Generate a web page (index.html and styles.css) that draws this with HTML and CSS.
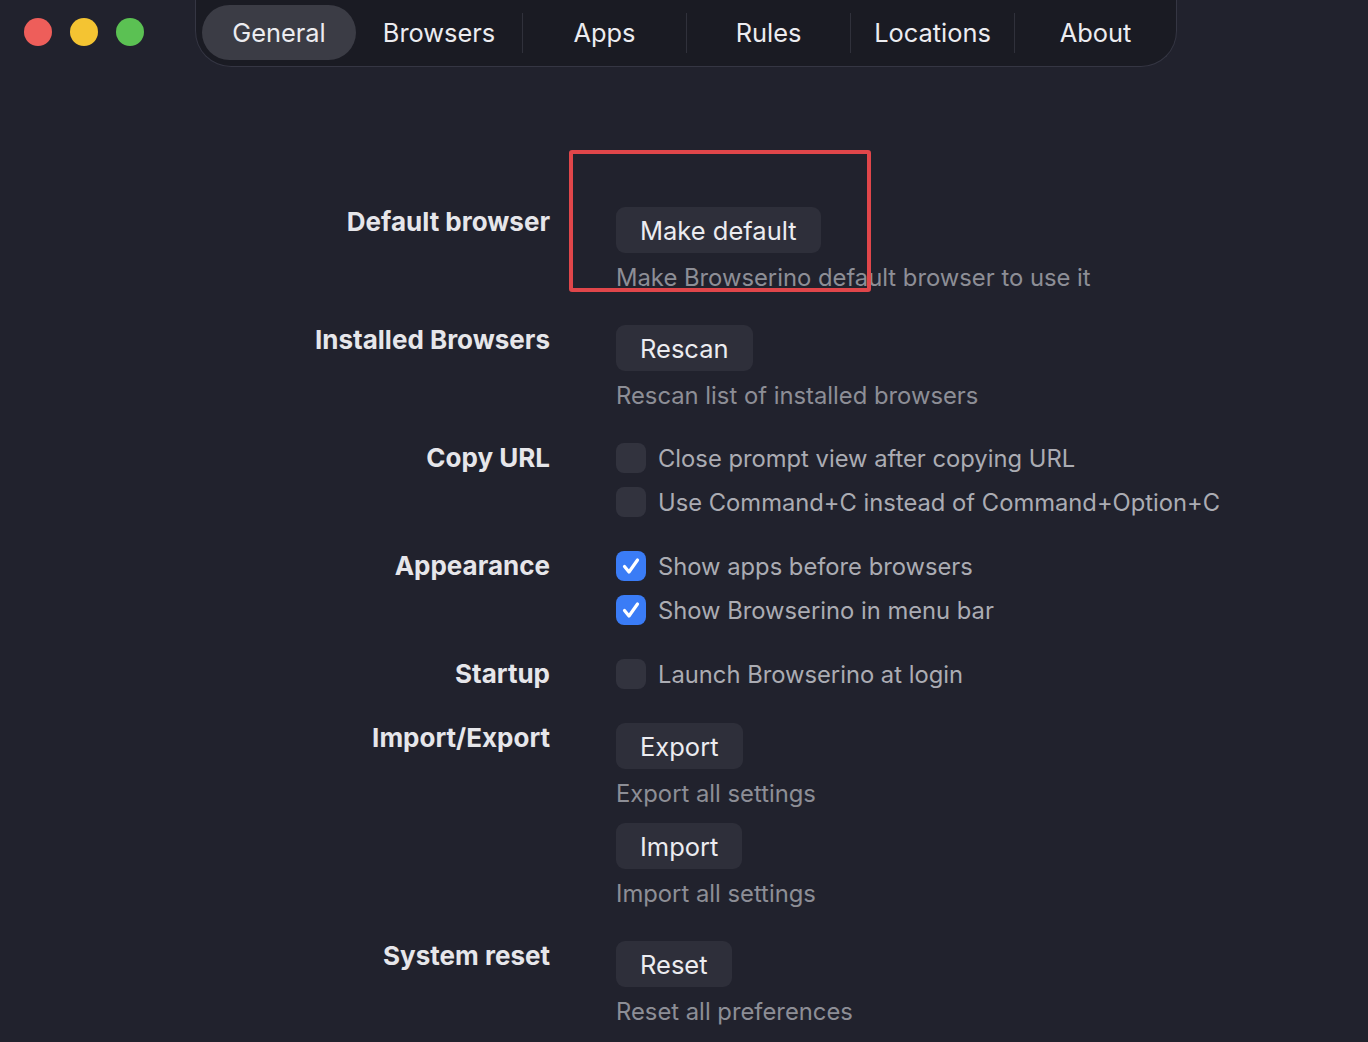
FILE: index.html
```html
<!DOCTYPE html>
<html lang="en">
<head>
  <meta charset="UTF-8">
  <meta name="viewport" content="width=device-width, initial-scale=1.0">
  <title>Browserino Preferences</title>
  <link rel="stylesheet" href="styles.css">
</head>
<body>

<div class="titlebar">
  <div class="lights">
    <span class="light red"></span>
    <span class="light yellow"></span>
    <span class="light green"></span>
  </div>
  <nav class="tabs">
    <a class="tab active">General</a>
    <a class="tab first">Browsers</a>
    <a class="tab">Apps</a>
    <a class="tab">Rules</a>
    <a class="tab">Locations</a>
    <a class="tab last">About</a>
  </nav>
</div>

<div class="settings">
  <div class="row">
    <div class="label">Default browser</div>
    <div class="content">
      <button class="btn">Make default</button>
      <div class="desc">Make Browserino default browser to use it</div>
    </div>
    <div class="highlight"></div>
  </div>

  <div class="row">
    <div class="label">Installed Browsers</div>
    <div class="content">
      <button class="btn">Rescan</button>
      <div class="desc">Rescan list of installed browsers</div>
    </div>
  </div>

  <div class="row">
    <div class="label">Copy URL</div>
    <div class="content checks">
      <label class="check"><span class="box"></span>Close prompt view after copying URL</label>
      <label class="check"><span class="box"></span>Use Command+C instead of Command+Option+C</label>
    </div>
  </div>

  <div class="row">
    <div class="label">Appearance</div>
    <div class="content checks">
      <label class="check"><span class="box on"><svg viewBox="0 0 30 30" width="30" height="30"><path d="M8.5 15.5 L13 21 L21.5 9" fill="none" stroke="#fff" stroke-width="3.2" stroke-linecap="round" stroke-linejoin="round"/></svg></span>Show apps before browsers</label>
      <label class="check"><span class="box on"><svg viewBox="0 0 30 30" width="30" height="30"><path d="M8.5 15.5 L13 21 L21.5 9" fill="none" stroke="#fff" stroke-width="3.2" stroke-linecap="round" stroke-linejoin="round"/></svg></span>Show Browserino in menu bar</label>
    </div>
  </div>

  <div class="row">
    <div class="label">Startup</div>
    <div class="content checks">
      <label class="check"><span class="box"></span>Launch Browserino at login</label>
    </div>
  </div>

  <div class="row">
    <div class="label">Import/Export</div>
    <div class="content">
      <button class="btn">Export</button>
      <div class="desc">Export all settings</div>
      <button class="btn spaced">Import</button>
      <div class="desc">Import all settings</div>
    </div>
  </div>

  <div class="row">
    <div class="label">System reset</div>
    <div class="content">
      <button class="btn">Reset</button>
      <div class="desc">Reset all preferences</div>
    </div>
  </div>
</div>

</body>
</html>
```

FILE: styles.css
```css
body {
  margin: 0;
  background-color: #21222d;
  font-family: Inter, "Noto Sans", sans-serif;
  color: #e8e8ec;
  height: 1042px;
  overflow: hidden;
}

/* window chrome */
.titlebar {
  display: flex;
  align-items: flex-start;
  height: 67px;
}
.lights {
  display: flex;
  gap: 18px;
  padding: 18px 0 0 24px;
  width: 120px;
}
.light {
  width: 28px;
  height: 28px;
  border-radius: 50%;
}
.red { background-color: #ee5e5a; }
.yellow { background-color: #f4c432; }
.green { background-color: #5bc153; }

.tabs {
  display: flex;
  align-items: center;
  margin-left: 51px;
  margin-top: -10px;
  padding: 15px 0 6px 6px;
  background-color: #1a1b23;
  border: 1px solid #353643;
  border-top: none;
  border-radius: 0 0 36px 36px;
}
.tab {
  display: flex;
  align-items: center;
  justify-content: center;
  height: 40px;
  width: 164px;
  font-size: 25.4px;
  color: #ececf0;
  border-left: 1px solid #30313b;
  box-sizing: border-box;
}
.tab.first {
  width: 166px;
  border-left: none;
}
.tab.last {
  width: 162px;
}
.tab.active {
  width: 154px;
  height: 55px;
  border-left: none;
  border-radius: 28px;
  background-color: #3b3c45;
}

/* settings grid */
.settings {
  display: flex;
  flex-direction: column;
  gap: 32px;
  margin-top: 140px;
}
.row {
  position: relative;
  display: grid;
  grid-template-columns: 550px 1fr;
  column-gap: 66px;
}
.label {
  text-align: right;
  font-weight: 700;
  font-size: 26px;
  line-height: 30px;
  color: #e6e6ea;
}
.content {
  display: flex;
  flex-direction: column;
  align-items: flex-start;
}
.btn {
  font-family: inherit;
  font-size: 25.5px;
  color: #ececf0;
  background-color: #2e2f3a;
  border: none;
  border-radius: 9px;
  height: 46px;
  padding: 0 24px;
}
.btn.spaced {
  margin-top: 14px;
}
.desc {
  margin-top: 10px;
  font-size: 23.8px;
  line-height: 30px;
  color: #8d8e96;
}
.checks {
  gap: 12px;
  margin-top: -1px;
  margin-bottom: 1px;
}
.check {
  display: flex;
  align-items: center;
  gap: 12px;
  height: 32px;
  font-size: 23.75px;
  color: #abacb3;
}
.box {
  width: 30px;
  height: 30px;
  border-radius: 8px;
  background-color: #32333e;
}
.box.on {
  background-color: #3a7cf6;
}
.box svg {
  display: block;
}

/* red callout around the default button */
.highlight {
  position: absolute;
  left: 569px;
  top: -57px;
  width: 294px;
  height: 134px;
  border: 4px solid #e0464a;
  border-radius: 3px;
}
```
